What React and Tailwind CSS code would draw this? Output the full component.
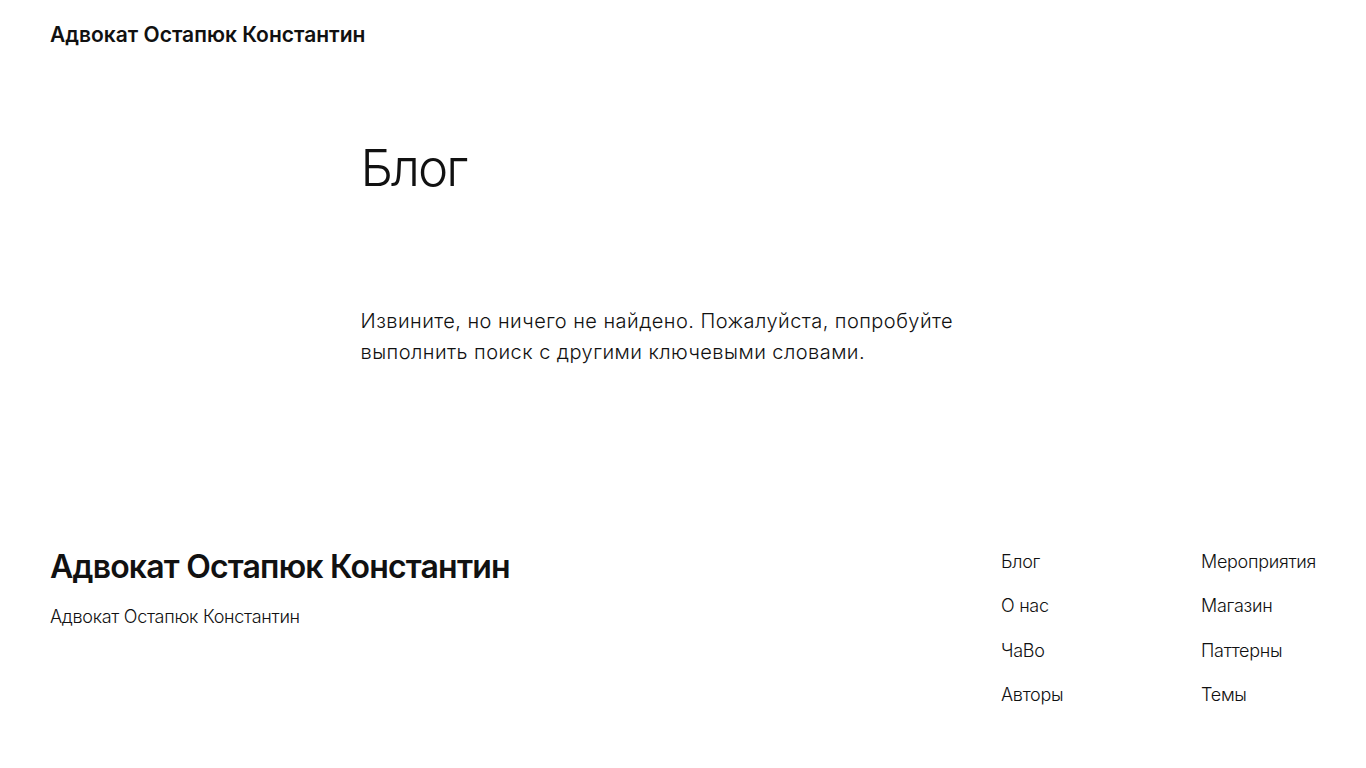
const navLeft = ['Блог', 'О нас', 'ЧаВо', 'Авторы'];
const navRight = ['Мероприятия', 'Магазин', 'Паттерны', 'Темы'];

export default function App() {
  return (
    <div className="min-h-screen bg-white text-[#111111] font-['Inter',sans-serif]">
      {/* Header */}
      <header className="px-[50px] pt-[20px] pb-[20px]">
        <a className="text-[21px] leading-[30px] font-semibold tracking-[0px]">Адвокат Остапюк Константин</a>
      </header>

      {/* Main */}
      <main className="max-w-[645px] mx-auto pt-[64px]">
        <h1 className="text-[51px] leading-[64px] font-light tracking-[-2px] pt-[2px]">Блог</h1>
        <p className="mt-[106px] text-[20px] leading-[31px] font-light tracking-[0.45px]">
          Извините, но ничего не найдено. Пожалуйста, попробуйте выполнить поиск с другими ключевыми словами.
        </p>
      </main>

      {/* Footer */}
      <footer className="px-[50px] mt-[179px] flex justify-between">
        <div>
          <h2 className="text-[32px] leading-[40px] font-semibold tracking-[-0.8px]">Адвокат Остапюк Константин</h2>
          <p className="mt-[18px] text-[18px] leading-[24px] font-light tracking-[-0.3px]">Адвокат Остапюк Константин</p>
        </div>
        <div className="flex pt-[3px]">
          <ul className="w-[200px] flex flex-col gap-[20.4px]">
            {navLeft.map((n) => (
              <li key={n} className="text-[18px] leading-[24px] font-light tracking-[-0.3px]">{n}</li>
            ))}
          </ul>
          <ul className="flex flex-col gap-[20.4px]">
            {navRight.map((n) => (
              <li key={n} className="text-[18px] leading-[24px] font-light tracking-[-0.3px]">{n}</li>
            ))}
          </ul>
        </div>
      </footer>
    </div>
  );
}
